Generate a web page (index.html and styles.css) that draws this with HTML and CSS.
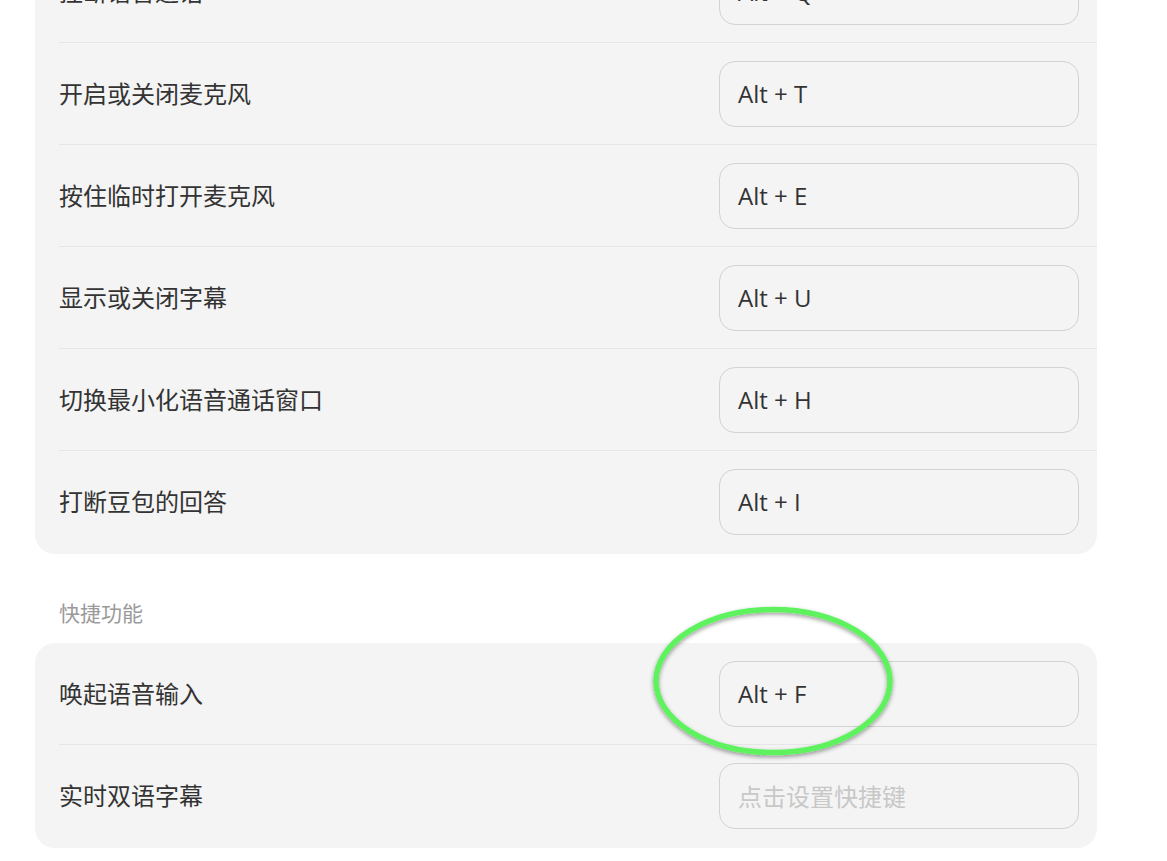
FILE: index.html
```html
<!DOCTYPE html>
<html lang="zh-CN">
<head>
<meta charset="utf-8">
<title>快捷键设置</title>
<link rel="stylesheet" href="styles.css">
</head>
<body>
<main class="page">
  <section class="card">
    <div class="row"><span class="label">挂断语音通话</span><div class="key">Alt + Q</div></div>
    <div class="row"><span class="label">开启或关闭麦克风</span><div class="key">Alt + T</div></div>
    <div class="row"><span class="label">按住临时打开麦克风</span><div class="key">Alt + E</div></div>
    <div class="row"><span class="label">显示或关闭字幕</span><div class="key">Alt + U</div></div>
    <div class="row"><span class="label">切换最小化语音通话窗口</span><div class="key">Alt + H</div></div>
    <div class="row"><span class="label">打断豆包的回答</span><div class="key">Alt + I</div></div>
  </section>
  <h2 class="section-title">快捷功能</h2>
  <section class="card">
    <div class="row"><span class="label">唤起语音输入</span><div class="key">Alt + F</div></div>
    <div class="row"><span class="label">实时双语字幕</span><div class="key placeholder">点击设置快捷键</div></div>
  </section>
</main>
<svg class="annotation" width="260" height="170" viewBox="0 0 260 170" aria-hidden="true">
  <defs>
    <filter id="sh" x="-20%" y="-20%" width="140%" height="140%">
      <feDropShadow dx="0" dy="2" stdDeviation="2" flood-color="#000" flood-opacity="0.4"/>
    </filter>
  </defs>
  <ellipse cx="130" cy="86" rx="117" ry="71.5" fill="none" stroke="#5ef25f" stroke-width="5.5" filter="url(#sh)"/>
</svg>
</body>
</html>
```
FILE: styles.css
```css
* { box-sizing: border-box; }
html, body { margin: 0; padding: 0; background: #ffffff; }
body {
  font-family: "Noto Sans", "Noto Sans CJK SC", sans-serif;
  color: #333333;
  overflow: hidden;
  height: 861px;
  position: relative;
}
.page {
  width: 1062px;
  margin: -59px 0 0 35px;
  display: flex;
  flex-direction: column;
}
.card {
  background: #f4f4f4;
  border-radius: 20px;
  padding-left: 24px;
  padding-bottom: 2px;
  display: flex;
  flex-direction: column;
}
.row {
  height: 102px;
  display: flex;
  align-items: center;
  justify-content: space-between;
  padding-right: 18px;
  border-top: 1px solid #e6e6e6;
}
.row:first-child { border-top: none; height: 101px; }
.label {
  font-size: 24px;
  line-height: 30px;
  color: #333333;
}
.key {
  width: 360px;
  height: 66px;
  border: 1px solid #d2d2d2;
  border-radius: 16px;
  padding-left: 18px;
  display: flex;
  align-items: center;
  font-family: "Open Sans", "Noto Sans CJK SC", sans-serif;
  font-size: 24px;
  color: #333333;
}
.key.placeholder {
  font-family: "Noto Sans", "Noto Sans CJK SC", sans-serif;
  color: #c8c8c8;
  font-size: 24px;
}
.section-title {
  margin: 47px 0 18px 24px;
  font-size: 21px;
  line-height: 24px;
  font-weight: normal;
  color: #9a9a9a;
}
.annotation {
  position: absolute;
  left: 643px;
  top: 595px;
}
```
